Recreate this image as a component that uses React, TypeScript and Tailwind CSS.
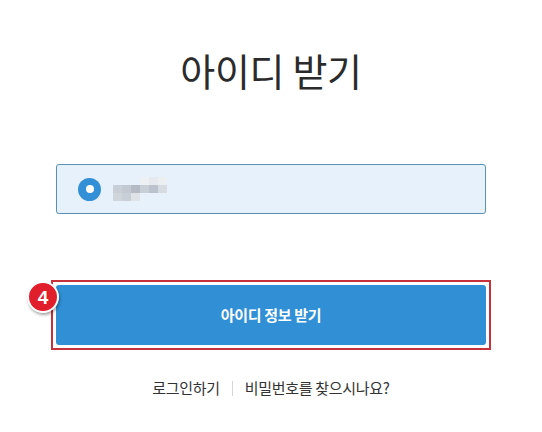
import React from "react";

const blur: (string | null)[][] = [
  [null, null, null, "#eef1f4", "#e6e9ee", "#eceff2"],
  ["#c9cfd7", "#c3c9d1", "#b4bbc5", "#c9cfd7", "#bcc3cc", "#d7dce2"],
  ["#d0d5dc", "#c9cfd6", "#dfe3e8", null, null, null],
];

export default function App() {
  return (
    <div
      className="w-[542px] h-[432px] bg-white flex flex-col items-center text-[#333]"
      style={{ fontFamily: '"Noto Sans CJK KR", "Noto Sans", sans-serif' }}
    >
      <h1 className="mt-[45px] text-[38px] leading-[49px] font-normal tracking-[-0.3px] text-[#2b2b2b]">
        아이디 받기
      </h1>

      {/* masked id field */}
      <div className="mt-[70px] w-[430px] h-[50px] bg-[#e6f1fb] border border-[#5b90b4] rounded-[3px] flex items-center pl-[21px]">
        <div className="w-[23px] h-[23px] rounded-full bg-[#3490d6] flex items-center justify-center">
          <div className="w-[8px] h-[8px] rounded-full bg-white" />
        </div>
        <div className="ml-[12px] flex flex-col">
          {blur.map((row, i) => (
            <div key={i} className="flex">
              {row.map((c, j) => (
                <div
                  key={j}
                  className="w-[9px] h-[8px]"
                  style={{ backgroundColor: c ?? "transparent" }}
                />
              ))}
            </div>
          ))}
        </div>
      </div>

      {/* highlighted submit */}
      <div className="relative mt-[66px] border-2 border-[#c6313b] p-[3px]">
        <button className="w-[430px] h-[60px] bg-[#3190d5] rounded-[3px] text-white text-[15px] font-bold tracking-[-0.3px]">
          아이디 정보 받기
        </button>
        <div className="absolute left-[-26px] top-[-1px] w-[32px] h-[32px] rounded-full bg-[#e11f2c] border-2 border-white shadow-[1px_2px_3px_rgba(0,0,0,0.35)] flex items-center justify-center text-white text-[19px] font-bold leading-none">
          <span style={{ fontFamily: '"Liberation Sans", Arial, sans-serif' }}>4</span>
        </div>
      </div>

      <div className="mt-[27px] flex items-center text-[15px] tracking-[-0.3px] text-[#333]">
        <span>로그인하기</span>
        <span className="mx-[12px] w-px h-[15px] bg-[#d5d5d5]" />
        <span>비밀번호를 찾으시나요?</span>
      </div>
    </div>
  );
}
